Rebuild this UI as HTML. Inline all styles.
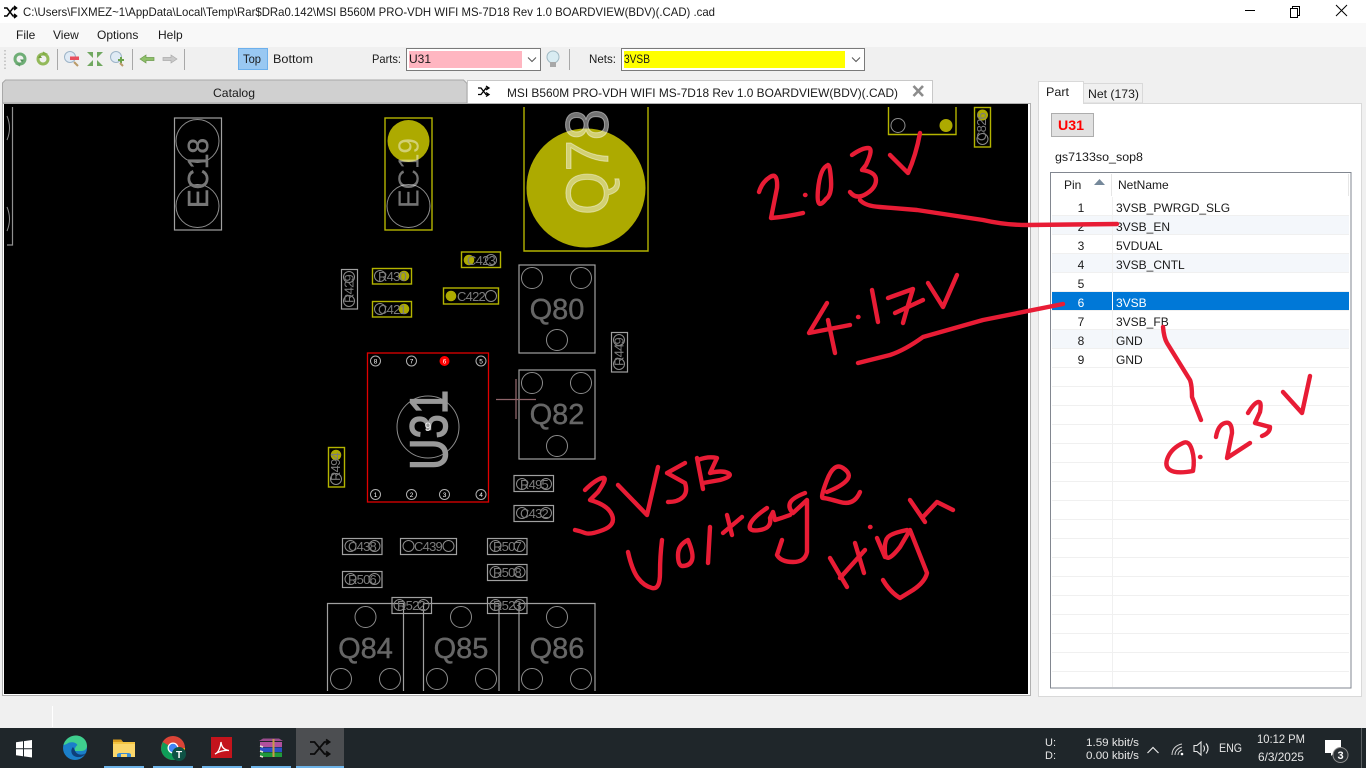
<!DOCTYPE html>
<html><head><meta charset="utf-8"><title>Boardview</title>
<style>
html,body{margin:0;padding:0;width:1366px;height:768px;overflow:hidden;background:#f0f0f0}
svg{display:block;position:absolute;left:0;top:0}
text{font-family:"Liberation Sans",sans-serif;font-size:12px;fill:#1a1a1a}
.b text{fill:#7c7c7c;font-size:13px;text-anchor:middle;letter-spacing:-.8px}
.q text{fill:#666;font-size:29px;text-anchor:middle;stroke:#666;stroke-width:.4}
.box{fill:none;stroke:#a0a0a0;stroke-width:1.2}
.yb{fill:none;stroke:#b4b400;stroke-width:1.4}
.c{fill:none;stroke:#8c8c8c;stroke-width:1}
.f{fill:#adaa00}
.pin{fill:none;stroke:#b0b0b0;stroke-width:1}
.pn{fill:#fff;font-size:6.5px;text-anchor:middle}
.ink{fill:none;stroke:#e81c35;stroke-width:4.4;stroke-linecap:round;stroke-linejoin:round}
.tb text{fill:#e6e6e6}
.r{text-anchor:middle}
</style></head><body>
<svg width="1366" height="768" viewBox="0 0 1366 768" xmlns="http://www.w3.org/2000/svg">
<defs><clipPath id="bd"><rect x="4" y="104" width="1024" height="587"/></clipPath></defs>
<!-- chrome -->
<rect width="1366" height="768" fill="#f0f0f0"/>
<rect width="1366" height="23" fill="#fff"/>
<rect y="23" width="1366" height="24" fill="#f8f8f8"/>
<path d="M4 8h3l6 8h3M4 16h3l6-8h3M14 6l2.5 2-2.5 2M14 14l2.5 2-2.5 2" fill="none" stroke="#000" stroke-width="1.5"/>
<text x="23" y="16" textLength="692" lengthAdjust="spacingAndGlyphs" fill="#000">C:\Users\FIXMEZ~1\AppData\Local\Temp\Rar$DRa0.142\MSI B560M PRO-VDH WIFI MS-7D18 Rev 1.0 BOARDVIEW(BDV)(.CAD) .cad</text>
<path d="M1245 10.5h10" stroke="#000" stroke-width="1"/>
<path d="M1290.5 8.500h7v9h-7zM1292.500 8.500v-2h7v9h-2" fill="none" stroke="#000"/>
<path d="M1336 5l11 11M1347 5l-11 11" stroke="#000" stroke-width="1"/>
<text x="16" y="39">File</text><text x="53" y="39">View</text><text x="97" y="39">Options</text><text x="158" y="39">Help</text>
<!-- toolbar -->
<path d="M5 50v20" stroke="#bbb" stroke-width="1.5" stroke-dasharray="1.500 2"/>
<circle cx="20" cy="59" r="5" fill="none" stroke="#6fae76" stroke-width="3"/><path d="M20 59.500h4l-2 3z" fill="#4f8f58"/><path d="M15 64l5 2.500 1-4z" fill="#5f9f68"/>
<circle cx="43" cy="59" r="5" fill="none" stroke="#93b95a" stroke-width="3"/><path d="M38 58h4l-2-3z" fill="#6f9a3a"/><path d="M48 54l-5-2.500-1 4z" fill="#82ad46"/>
<path d="M57.500 49v21M132.500 49v21M184.500 49v21M569.500 49v21" stroke="#a8a8a8"/>
<circle cx="70" cy="57" r="5.500" fill="#dfeaf5" stroke="#9db4c8"/><rect x="70" y="56.500" width="9" height="3.500" fill="#e8505f"/><path d="M74 62l4 4" stroke="#b99a68" stroke-width="2"/>
<g fill="#70a860"><path d="M87 52h6v6zM103 52h-6v6zM87 66h6v-6zM103 66h-6v-6z"/></g>
<circle cx="116" cy="57" r="5.500" fill="#dfeaf5" stroke="#9db4c8"/><path d="M118 60h6M121 57v6" stroke="#6aa24a" stroke-width="2"/><path d="M120 63l3 3" stroke="#b99a68" stroke-width="2"/>
<path d="M140 59l6-4v2.500h8v3h-8v2.500z" fill="#8fc06a" stroke="#6b9a4c" stroke-width=".7"/>
<path d="M177 59l-6-4v2.500h-8v3h8v2.500z" fill="#c9c9c9" stroke="#aaa" stroke-width=".7"/>
<rect x="238.500" y="48.500" width="29" height="21" fill="#99c8f2" stroke="#6db0ec"/>
<text x="243" y="63" textLength="18" lengthAdjust="spacingAndGlyphs">Top</text><text x="273" y="63" textLength="40" lengthAdjust="spacingAndGlyphs">Bottom</text>
<text x="372" y="63" textLength="29" lengthAdjust="spacingAndGlyphs">Parts:</text>
<rect x="406.500" y="48.500" width="134" height="22" fill="#fff" stroke="#7a7a7a"/>
<rect x="409" y="51" width="113" height="17" fill="#ffb6c1"/>
<text x="409" y="63" fill="#8b1a1a">U31</text>
<path d="M528 57.500l4 4 4-4" fill="none" stroke="#555"/>
<circle cx="553" cy="57" r="6" fill="#d9ecf2" stroke="#9fb8c2"/><rect x="550" y="62" width="6" height="5" fill="#a8a8a8"/>
<text x="589" y="63" textLength="27" lengthAdjust="spacingAndGlyphs">Nets:</text>
<rect x="621.500" y="48.500" width="243" height="22" fill="#fff" stroke="#7a7a7a"/>
<rect x="624" y="51" width="221" height="17" fill="#ff0"/>
<text x="624" y="63" textLength="26" lengthAdjust="spacingAndGlyphs" fill="#555500">3VSB</text>
<path d="M852 57.500l4 4 4-4" fill="none" stroke="#555"/>
<!-- tabs -->
<path d="M2.500 103V83l3-3h458l3.500 3.500V103z" fill="#d0d0d0" stroke="#a8a8a8"/>
<text x="213" y="97" textLength="42" lengthAdjust="spacingAndGlyphs">Catalog</text>
<rect x="467.500" y="80.500" width="465" height="24" fill="#fff" stroke="#c8c8c8"/>
<path d="M478 88h3l5 6.500h3M478 94.500h3l5-6.500h3M486 86l3 2-3 2M486 92.500l3 2-3 2" fill="none" stroke="#000" stroke-width="1.300"/>
<text x="507" y="97" textLength="391" lengthAdjust="spacingAndGlyphs">MSI B560M PRO-VDH WIFI MS-7D18 Rev 1.0 BOARDVIEW(BDV)(.CAD)</text>
<path d="M913.500 86l9.500 10M923 86l-9.500 10" stroke="#8c8c8c" stroke-width="2.600"/>
<!-- board frame -->
<rect x="2.500" y="103.500" width="1028" height="592" fill="#fff" stroke="#b0b0b0"/>
<rect x="4" y="104" width="1024" height="590" fill="#000"/>
<g clip-path="url(#bd)">
<!-- left edge -->
<path d="M12.500 107V245H7" fill="none" stroke="#909090" stroke-width="1.200"/>
<path d="M7 116q5 12 0 24M7 207q5 12 0 24" fill="none" stroke="#8c8c8c"/>
<!-- EC18/19 -->
<rect class="box" x="174.500" y="118" width="47" height="112"/>
<circle class="c" cx="197.500" cy="141" r="21.500"/><circle class="c" cx="197.500" cy="206" r="21.500"/>
<text transform="translate(208,173) rotate(-90)" x="-35" textLength="70" lengthAdjust="spacingAndGlyphs" style="fill:#777;stroke:#777;stroke-width:.5;font-size:29px">EC18</text>
<rect class="yb" x="385" y="118" width="47" height="112"/>
<circle class="f" cx="408.500" cy="141" r="21"/><circle class="c" cx="408.500" cy="206" r="21.500"/>
<text transform="translate(418.500,173) rotate(-90)" x="-35" textLength="70" lengthAdjust="spacingAndGlyphs" style="fill:#fff;fill-opacity:.45;font-size:29px">EC19</text>
<!-- Q78 -->
<path class="yb" d="M524 107V251H648V107"/>
<circle class="f" cx="586" cy="188" r="59.500"/>
<text transform="translate(608,162) rotate(-90)" x="-53" textLength="106" lengthAdjust="spacingAndGlyphs" style="fill:#fff;fill-opacity:.45;stroke:#fff;stroke-opacity:.45;stroke-width:1;font-size:60px">Q78</text>
<!-- top right -->
<path class="yb" d="M888.500 107V134.500H956V107"/>
<circle class="c" cx="898" cy="125.500" r="7"/><circle class="f" cx="946" cy="125.500" r="6.500"/>
<rect class="yb" x="974.500" y="107.500" width="16" height="39.500"/>
<circle class="f" cx="982.500" cy="115" r="5.500"/><circle class="c" cx="982.500" cy="139" r="5.500"/>
<g class="b">
<text transform="translate(986,127) rotate(-90)">C826</text>
<!-- small yellow parts -->
<rect class="yb" x="372.500" y="268.500" width="39" height="15.500"/><circle class="c" cx="380" cy="276" r="5.500"/><circle class="f" cx="404" cy="276" r="5.300"/><text x="392" y="281">R430</text>
<rect class="yb" x="372.500" y="301.500" width="39" height="15.500"/><circle class="c" cx="380" cy="309" r="5.500"/><circle class="f" cx="404" cy="309" r="5.300"/><text x="392" y="314">C421</text>
<rect class="yb" x="461.500" y="252" width="39" height="15.500"/><circle class="f" cx="469" cy="260" r="5.300"/><circle class="c" cx="491" cy="260" r="5.500"/><text x="481" y="265">C423</text>
<rect class="yb" x="443.500" y="288" width="55" height="16"/><circle class="f" cx="451" cy="296" r="5.300"/><circle class="c" cx="491" cy="296" r="5.500"/><text x="471" y="301">C422</text>
<rect class="yb" x="328.500" y="447.500" width="16" height="39.500"/><circle class="f" cx="336" cy="455" r="5.300"/><circle class="c" cx="336" cy="479" r="5.500"/><text transform="translate(340,467) rotate(-90)">R494</text>
<!-- small gray parts -->
<rect class="box" x="341.500" y="269.500" width="16" height="39.500"/><circle class="c" cx="349" cy="277" r="5.500"/><circle class="c" cx="349" cy="301" r="5.500"/><text transform="translate(353.500,289) rotate(-90)">R429</text>
<rect class="box" x="611.500" y="332.500" width="16" height="39.500"/><circle class="c" cx="619" cy="340" r="5.500"/><circle class="c" cx="619" cy="364" r="5.500"/><text transform="translate(623.500,352) rotate(-90)">R449</text>
<rect class="box" x="514" y="475.500" width="39.500" height="16"/><circle class="c" cx="522" cy="484" r="5.500"/><circle class="c" cx="546" cy="484" r="5.500"/><text x="534" y="489">R495</text>
<rect class="box" x="514" y="505.500" width="39.500" height="16"/><circle class="c" cx="522" cy="513" r="5.500"/><circle class="c" cx="546" cy="513" r="5.500"/><text x="534" y="518">C432</text>
<rect class="box" x="342.500" y="538.500" width="39.500" height="16"/><circle class="c" cx="350.500" cy="546" r="5.500"/><circle class="c" cx="374.500" cy="546" r="5.500"/><text x="362" y="551">C438</text>
<rect class="box" x="400.500" y="538.500" width="56" height="16"/><circle class="c" cx="408.500" cy="546" r="5.500"/><circle class="c" cx="448.500" cy="546" r="5.500"/><text x="428" y="551">C439</text>
<rect class="box" x="487.500" y="538.500" width="39.500" height="16"/><circle class="c" cx="495.500" cy="546" r="5.500"/><circle class="c" cx="519.500" cy="546" r="5.500"/><text x="507" y="551">R507</text>
<rect class="box" x="487.500" y="564.500" width="39.500" height="16"/><circle class="c" cx="495.500" cy="572" r="5.500"/><circle class="c" cx="519.500" cy="572" r="5.500"/><text x="507" y="577">R508</text>
<rect class="box" x="342.500" y="571.500" width="39.500" height="16"/><circle class="c" cx="350.500" cy="579" r="5.500"/><circle class="c" cx="374.500" cy="579" r="5.500"/><text x="362" y="584">R506</text>
</g>
<!-- Q parts -->
<g class="q">
<rect class="box" x="519" y="265" width="76" height="88"/><circle class="c" cx="532" cy="278" r="10.500"/><circle class="c" cx="581" cy="278" r="10.500"/><circle class="c" cx="557" cy="340" r="10.500"/><text x="557" y="319">Q80</text>
<rect class="box" x="519" y="370" width="76" height="89"/><circle class="c" cx="532" cy="383" r="10.500"/><circle class="c" cx="581" cy="383" r="10.500"/><circle class="c" cx="557" cy="446" r="10.500"/><text x="557" y="424">Q82</text>
<path class="box" d="M327.500 695V603.500H403.500V695"/><circle class="c" cx="365.500" cy="617" r="10.500"/><circle class="c" cx="341" cy="679" r="10.500"/><circle class="c" cx="390" cy="679" r="10.500"/><text x="365.500" y="658">Q84</text>
<path class="box" d="M423.500 695V603.500H499V695"/><circle class="c" cx="461" cy="617" r="10.500"/><circle class="c" cx="437" cy="679" r="10.500"/><circle class="c" cx="486" cy="679" r="10.500"/><text x="461" y="658">Q85</text>
<path class="box" d="M519 695V603.500H595V695"/><circle class="c" cx="557" cy="617" r="10.500"/><circle class="c" cx="532" cy="679" r="10.500"/><circle class="c" cx="581" cy="679" r="10.500"/><text x="557" y="658">Q86</text>
</g>
<g class="b">
<rect class="box" x="392" y="597.500" width="39.500" height="16"/><circle class="c" cx="399.500" cy="605" r="5.500"/><circle class="c" cx="423.500" cy="605" r="5.500"/><text x="411" y="610">R522</text>
<rect class="box" x="487.500" y="597.500" width="39.500" height="16"/><circle class="c" cx="495.500" cy="605" r="5.500"/><circle class="c" cx="519.500" cy="605" r="5.500"/><text x="507" y="610">R523</text>
</g>
<!-- U31 -->
<rect x="367.500" y="353" width="121" height="149" fill="none" stroke="#e00000" stroke-width="1.300"/>
<circle class="c" cx="428" cy="427" r="31"/>
<text transform="translate(447,430) rotate(-90)" x="-40" textLength="80" lengthAdjust="spacingAndGlyphs" style="fill:#999;stroke:#999;stroke-width:1.4;font-size:53px">U31</text>
<text x="428" y="431" class="r" style="fill:#eee;font-size:12px">9</text>
<circle class="pin" cx="375.500" cy="361" r="5"/><circle class="pin" cx="411.500" cy="361" r="5"/><circle cx="444.500" cy="361" r="5" fill="#f00"/><circle class="pin" cx="481" cy="361" r="5"/>
<circle class="pin" cx="375.500" cy="494.500" r="5"/><circle class="pin" cx="411.500" cy="494.500" r="5"/><circle class="pin" cx="444.500" cy="494.500" r="5"/><circle class="pin" cx="481" cy="494.500" r="5"/>
<text class="pn" x="375.500" y="363.500">8</text><text class="pn" x="411.500" y="363.500">7</text><text class="pn" x="444.500" y="363.500">6</text><text class="pn" x="481" y="363.500">5</text>
<text class="pn" x="375.500" y="497">1</text><text class="pn" x="411.500" y="497">2</text><text class="pn" x="444.500" y="497">3</text><text class="pn" x="481" y="497">4</text>
<path d="M496 399.500h40M516 379v40" stroke="#8e6469" stroke-width="1.300"/>
</g>
<!-- right panel -->
<rect x="1038.500" y="103.500" width="323" height="593" fill="#fff" stroke="#d9d9d9"/>
<path d="M1083.500 103V83.500H1142.500V103z" fill="#f0f0f0" stroke="#d9d9d9"/>
<path d="M1038.500 104V81.500H1083.500V104" fill="#fff" stroke="#d9d9d9"/>
<text x="1046" y="96" textLength="23" lengthAdjust="spacingAndGlyphs">Part</text>
<text x="1088" y="98" textLength="51" lengthAdjust="spacingAndGlyphs">Net (173)</text>
<rect x="1051.500" y="113.500" width="42" height="23" fill="#e1e1e1" stroke="#adadad"/>
<text x="1058" y="130" textLength="26" lengthAdjust="spacingAndGlyphs" style="fill:#f00;font-size:13.500px;font-weight:bold">U31</text>
<text x="1055" y="161" textLength="88" lengthAdjust="spacingAndGlyphs">gs7133so_sop8</text>
<rect x="1050.500" y="172.500" width="300.500" height="515.500" fill="#fff" stroke="#828790"/>
<path d="M1111.500 174v22M1348.500 174v22" stroke="#e6e6e6"/>
<text x="1064" y="189">Pin</text><path d="M1094 185l5.500-6 5.500 6z" fill="#75889a"/>
<text x="1118" y="189">NetName</text>
<g fill="#f4f7fb"><rect x="1052" y="216" width="297" height="18"/><rect x="1052" y="254" width="297" height="18"/><rect x="1052" y="330" width="297" height="18"/></g>
<g stroke="#f0f0f0" fill="none"><path d="M1052 215.500h297M1052 234.500h297M1052 253.500h297M1052 272.500h297M1052 291.500h297M1052 310.500h297M1052 329.500h297M1052 348.500h297M1052 367.500h297M1052 386.500h297M1052 405.500h297M1052 424.500h297M1052 443.500h297M1052 462.500h297M1052 481.500h297M1052 500.500h297M1052 519.500h297M1052 538.500h297M1052 557.500h297M1052 576.500h297M1052 595.500h297M1052 614.500h297M1052 633.500h297M1052 652.500h297M1052 671.500h297M1112.500 197v490"/></g>
<rect x="1052" y="292" width="297" height="18" fill="#0078d7"/><path d="M1112.500 292v18" stroke="#fff"/>
<g class="r"><text x="1081" y="212">1</text><text x="1081" y="231">2</text><text x="1081" y="250">3</text><text x="1081" y="269">4</text><text x="1081" y="288">5</text><text x="1081" y="307" style="fill:#fff">6</text><text x="1081" y="326">7</text><text x="1081" y="345">8</text><text x="1081" y="364">9</text></g>
<text x="1116" y="212">3VSB_PWRGD_SLG</text><text x="1116" y="231">3VSB_EN</text><text x="1116" y="250">5VDUAL</text><text x="1116" y="269">3VSB_CNTL</text><text x="1116" y="307" style="fill:#fff">3VSB</text><text x="1116" y="326">3VSB_FB</text><text x="1116" y="345">GND</text><text x="1116" y="364">GND</text>
<!-- status -->
<path d="M52.500 706v21" stroke="#fff"/>
<!-- taskbar -->
<g class="tb">
<rect y="728" width="1366" height="40" fill="#1f262a"/>
<rect x="296" y="728" width="48" height="40" fill="#4c4e51"/>
<g fill="#fff"><path d="M16 742.300l7-1v7h-7zM24 741.100l8-1.100v8.300h-8zM16 749.200h7v7l-7-1zM24 749.200h8v8.300l-8-1.100z"/></g>
<!-- edge -->
<circle cx="75" cy="748" r="12" fill="#1b7fc9"/>
<path d="M63.500 745c2-7 8-9.500 12.500-9.500 6 0 11 4.500 11 10.500 0 3-2.500 5-5.500 5h-7c0-4 3-6 3-6-2-3-7-3.500-10-1.500-2 1-3 1.500-4 1.500z" fill="#3fcf8e"/>
<path d="M73 747c-3 3-2 9 4 10 4 .5 7-1 9-4-3 2.500-8 2-10-.5-1-1.500-1.500-3.500-3-5.500z" fill="#0e3f7a"/>
<!-- folder -->
<path d="M113 739.500h8l2 2.500h12v15h-22z" fill="#f4c542"/><path d="M113 739.500h8l2 2.500h-10z" fill="#d69a1e"/><path d="M113 744h22v13h-22z" fill="#fbd76b"/><path d="M117 757v-3l2-1h10l2 1v3h-4v-3h-6v3z" fill="#3d8ed4"/>
<!-- chrome -->
<circle cx="173" cy="748" r="12" fill="#db4437"/><path d="M173 748l-10.400-6 -1.600 6c0 6.600 5.400 12 12 12 .7 0 1.500 0 2-.2z" fill="#0f9d58"/><path d="M173 748h12c0 6-3 9-9 12z" fill="#f4b400"/><circle cx="173" cy="748" r="5.500" fill="#fff"/><circle cx="173" cy="748" r="4.200" fill="#4285f4"/>
<circle cx="179" cy="754" r="7" fill="#0f5245"/><text x="179" y="758" class="r" style="fill:#fff;font-size:10px;font-weight:bold">T</text>
<!-- adobe -->
<rect x="211" y="737" width="21" height="21" fill="#c4141c"/><path d="M215 754c3-1 5.500-6 6-12 .5 5 3 8 8 8.500-5-.5-9 .5-14 3.500z" fill="none" stroke="#fff" stroke-width="1.300"/>
<!-- winrar -->
<rect x="260" y="742" width="22" height="5" fill="#b0509e"/><rect x="260" y="747.500" width="22" height="4.500" fill="#2a50c8"/><rect x="260" y="752.500" width="22" height="4.500" fill="#1f9a3c"/><path d="M259 741l4-2.500h16l4 2.500z" fill="#9a4c8e"/><path d="M260 746l3 1M260 751l3 1M260 756l3 1" stroke="#e8e0d0" stroke-width="1.500"/><path d="M273.500 739v18" stroke="#c99a4a" stroke-width="2"/>
<!-- shuffle -->
<path d="M310 742h4.500l10 12h4.500M310 754h4.500l10-12h4.500M326 739.500l3.500 2.500-3.500 2.500M326 751.500l3.500 2.500-3.500 2.500" fill="none" stroke="#0b0b0b" stroke-width="1.800"/>
<g fill="#6db3e8"><rect x="104" y="766" width="40" height="2"/><rect x="153" y="766" width="40" height="2"/><rect x="202" y="766" width="40" height="2"/><rect x="251" y="766" width="40" height="2"/><rect x="296" y="766" width="48" height="2"/></g>
<text x="1045" y="746" style="font-size:11px">U:</text><text x="1045" y="759" style="font-size:11px">D:</text>
<text x="1086" y="746" textLength="53" lengthAdjust="spacingAndGlyphs" style="font-size:11px">1.59 kbit/s</text><text x="1086" y="759" textLength="53" lengthAdjust="spacingAndGlyphs" style="font-size:11px">0.00 kbit/s</text>
<path d="M1147.500 753l5.500-5.500 5.500 5.500" fill="none" stroke="#e6e6e6" stroke-width="1.200"/>
<path d="M1172 755c0-6 4-10 10-11M1175 755c0-4 3-7 7-8M1178 755c0-2 1.500-4 4-5" fill="none" stroke="#cfcfcf" stroke-width="1"/><circle cx="1182" cy="754" r="1.300" fill="#fff"/>
<path d="M1194 745.500h3l4-3.500v13l-4-3.500h-3zM1203.500 745.500q2 3 0 6M1206 743.500q4 5 0 10" fill="none" stroke="#e6e6e6" stroke-width="1.100"/>
<text x="1219" y="752" textLength="23" lengthAdjust="spacingAndGlyphs">ENG</text>
<text x="1257" y="743" textLength="48" lengthAdjust="spacingAndGlyphs">10:12 PM</text><text x="1258" y="761" textLength="46" lengthAdjust="spacingAndGlyphs">6/3/2025</text>
<path d="M1325 740h16v13h-7l-3 3v-3h-6z" fill="#fff"/>
<circle cx="1340.500" cy="755" r="7.500" fill="#2a3034" stroke="#8f8f8f"/><text x="1340.500" y="759" class="r" style="fill:#fff;font-size:11px;font-weight:bold">3</text>
<path d="M1361.500 728v40" stroke="#5a5f62"/>
</g>
<!-- ink -->
<g class="ink">
<path d="M759 192Q762 182 770 177T777 188L771 218Q785 217 803 213"/><path d="M805 195h.5"/>
<path d="M828 165Q820 168 818 190T826 199Q832 195 831 180T828 165"/>
<path d="M852 155Q862 148 868 148T866 165L862 170Q876 172 876 180T866 194T850 192"/>
<path d="M890 155L908 173Q916 155 920 133"/>
<path d="M860 200Q865 206 880 207L917 210L983 220Q1005 225 1027 225L1117 224"/>
<path d="M827 303L809 333L850 325"/><path d="M828 320L835 353"/><path d="M858 317h.5"/>
<path d="M872 290L878 322"/><path d="M888 298L913 289Q908 305 903 323"/><path d="M895 313L923 300"/>
<path d="M928 283L943 307L957 275"/>
<path d="M858 363L890 355Q905 350 923 337L983 320L1063 304"/>
<path d="M1163 327Q1164 338 1167 343L1190 380Q1192 385 1192 397L1201 420"/>
<path d="M1183 443Q1172 448 1168 457T1170 470T1193 471Q1195 460 1192 450T1183 443"/><path d="M1200 457h.5"/>
<path d="M1216 437Q1218 425 1225 423T1232 433L1227 458L1250 443"/>
<path d="M1248 413Q1254 403 1258 402T1260 412L1255 423L1270 427Q1270 433 1262 436"/>
<path d="M1283 392L1302 413L1310 376"/>
<path d="M585 490Q595 480 602 478T598 492L590 500Q608 505 612 515T603 530T585 533T575 530"/>
<path d="M618 485L647 515L658 467"/>
<path d="M685 463L667 473L685 483Q688 492 683 497T668 502"/>
<path d="M697 458L703 489"/><path d="M698 460Q708 456 717 458L710 473Q722 470 728 473T720 480L703 483"/>
<path d="M628 552Q632 570 638 578T652 588T660 573T662 540"/>
<path d="M688 540Q678 545 678 555T682 566Q690 566 692 560T688 540"/>
<path d="M710 527L708 563"/><path d="M723 533L742 517"/><path d="M727 515L732 535"/>
<path d="M767 508Q752 518 750 525T760 530T770 518L773 512L775 520Q782 518 790 515"/>
<path d="M805 493Q792 498 790 503T793 513L807 500V552Q805 562 793 562T777 555L782 540"/>
<path d="M827 492Q842 486 847 480T843 468T827 480T823 498T840 502T860 492"/>
<path d="M830 558L847 587"/><path d="M840 578L865 550"/><path d="M855 543L864 573"/>
<path d="M870 527h.5"/><path d="M877 538L885 557"/>
<path d="M907 530Q892 533 888 537T885 553T900 547L910 530L927 573Q925 582 913 590L900 598Q890 592 883 580"/>
<path d="M910 500L925 522"/><path d="M923 517L937 502Q943 505 953 510"/>
</g>
</svg>
</body></html>
